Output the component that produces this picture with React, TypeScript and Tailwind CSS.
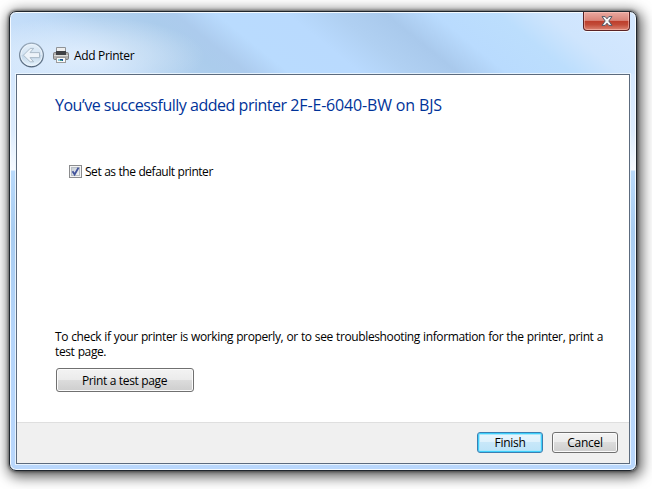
import React from "react";

function BackButton() {
  return (
    <svg width="26" height="26" viewBox="0 0 26 26" className="shrink-0">
      <defs>
        <linearGradient id="orb" x1="0" y1="0" x2="0" y2="1">
          <stop offset="0" stopColor="#e5f0fa" />
          <stop offset="0.5" stopColor="#d3e3f2" />
          <stop offset="0.52" stopColor="#c2d6e8" />
          <stop offset="1" stopColor="#e9f6ff" />
        </linearGradient>
        <linearGradient id="rim" x1="0" y1="0" x2="0" y2="1">
          <stop offset="0" stopColor="#9aabbc" />
          <stop offset="1" stopColor="#56697e" />
        </linearGradient>
      </defs>
      <circle cx="12.5" cy="13" r="11.8" fill="url(#orb)" stroke="url(#rim)" strokeWidth="1.4" />
      <circle cx="12.5" cy="13" r="10.7" fill="none" stroke="#f4faff" strokeWidth="0.9" opacity="0.8" />
      <path
        d="M4.4 13.2 L11.2 6.4 H14.6 L11 10.6 H20.5 V15.6 H11 L14.6 19.8 H11.2 Z"
        fill="#edf3f9"
        stroke="#a5b5c4"
        strokeWidth="0.9"
        strokeLinejoin="round"
      />
    </svg>
  );
}

function PrinterIcon() {
  return (
    <svg width="16" height="16" viewBox="0 0 16 16" className="shrink-0">
      <path d="M3.5 0.5 H12.5 V6 H3.5 Z" fill="#eeeeee" stroke="#8f9397" />
      <rect x="0.5" y="5.5" width="15" height="7" rx="1.2" fill="#b3b2b0" stroke="#7d7e80" />
      <rect x="3" y="4" width="10" height="4" fill="#3f4145" />
      <rect x="1" y="8" width="14" height="1" fill="#dededc" />
      <rect x="3" y="10" width="10" height="1" fill="#5d6062" />
      <rect x="3.5" y="10.5" width="9" height="5" fill="#fafafa" stroke="#9c9c9c" />
      <rect x="5" y="12" width="2" height="2" fill="#8ccce0" />
      <rect x="7" y="12" width="3" height="2" fill="#19529b" />
      <rect x="7" y="13" width="2" height="1" fill="#49a08c" />
    </svg>
  );
}

function CloseButton() {
  return (
    <button className="mr-[6px] flex h-[19px] w-[47px] items-center justify-center rounded-b-[4px] border border-t-0 border-[#5b2224] bg-[linear-gradient(#eaa9a1_0%,#d98478_47%,#bd3d2b_50%,#c24b38_70%,#dc8574_100%)] shadow-[inset_0_0_0_1px_rgba(255,205,195,0.5),0_1px_0_#f5faff]">
      <svg width="12" height="10" viewBox="0 0 12 10">
        <path
          d="M1 0.6 H4.2 L6 2.8 L7.8 0.6 H11 L7.8 5 L11 9.4 H7.8 L6 7.2 L4.2 9.4 H1 L4.2 5 Z"
          fill="#f7f7f7"
          stroke="#525866"
          strokeWidth="1"
          strokeLinejoin="round"
        />
      </svg>
    </button>
  );
}

function CheckBox() {
  return (
    <svg width="13" height="13" viewBox="0 0 13 13" className="shrink-0">
      <defs>
        <linearGradient id="well" x1="0" y1="0" x2="1" y2="1">
          <stop offset="0" stopColor="#c6cdd4" />
          <stop offset="1" stopColor="#f5f6f7" />
        </linearGradient>
      </defs>
      <rect x="0.5" y="0.5" width="12" height="12" fill="#f4f4f4" stroke="#8b8c8e" />
      <rect x="2.5" y="2.5" width="8" height="8" fill="url(#well)" stroke="#b9bfc6" />
      <path d="M3.5 6.2 L5.6 9.4 L9.5 2.6" fill="none" stroke="#43549c" strokeWidth="1.9" />
    </svg>
  );
}

const grayButton =
  "flex items-center justify-center rounded-[3px] border border-[#707070] bg-[linear-gradient(#f3f3f3_0%,#ebebeb_49%,#dcdcdc_50%,#cecece_100%)] shadow-[inset_0_0_0_1px_#fbfbfb]";

export default function App() {
  return (
    <div className="h-[489px] w-[652px] overflow-hidden bg-white pt-[11px] pl-[9px] font-['Open_Sans','Noto_Sans',sans-serif] text-[12px] leading-[15px] text-black">
      <div className="flex h-[460px] w-[628px] flex-col rounded-[7px] border border-[#20262d] bg-[linear-gradient(to_bottom,transparent_62px,#d4e7fd_62px,#ddecfd_120px,#f6faff_158px,#b9dafb_159px,#a9cdf1_220px,#b5d5fa_320px,#b9d7fc_100%),radial-gradient(ellipse_120px_40px_at_75px_44px,rgba(240,247,255,0.65),rgba(236,245,255,0.35)_55%,transparent),linear-gradient(39deg,#cfe4fb_0%,#c0dbf8_14%,#b2d1ef_22%,#abccec_30%,#accbed_34%,#b9dbfe_40%,#b9dafe_50%,#b0d0f2_57%,#a9c9ec_64%,#b9dbfe_71%,#bcdefd_80%,#cfe5fd_87%,#d5e8ff_100%)] bg-[length:100%_100%,100%_62px,100%_62px] bg-no-repeat shadow-[inset_0_0_0_1px_rgba(250,253,255,0.9),0_0_3px_1px_rgba(0,0,0,0.45),2px_3px_13px_3px_rgba(0,0,0,0.62)]">
        <header className="flex h-[61px] shrink-0 items-start justify-between">
          <div className="flex items-center pt-[30px] pl-[9px]">
            <BackButton />
            <div className="ml-[8px] flex items-center">
              <PrinterIcon />
              <span className="ml-[5px] whitespace-nowrap tracking-[-0.32px]">Add Printer</span>
            </div>
          </div>
          <CloseButton />
        </header>
        <main className="mx-[6px] mt-[1px] flex h-[390px] shrink-0 flex-col border border-[#5c6b7e] bg-white shadow-[0_0_0_1px_rgba(239,248,255,0.85)]">
          <section className="flex h-[347px] shrink-0 flex-col items-start pt-[19px] pl-[38px]">
            <h1 className="h-[22px] whitespace-nowrap text-[16px] leading-[22px] text-[#003399]">
              <span className="tracking-[-0.48px]">You’ve successfully added printer </span>
              <span className="tracking-[-0.16px]">2F-E-6040-BW on BJS</span>
            </h1>
            <label className="mt-[48px] ml-[14px] flex h-[15px] items-center">
              <CheckBox />
              <span className="ml-[3px] whitespace-nowrap tracking-[-0.47px] [word-spacing:0.3px]">
                Set as the default printer
              </span>
            </label>
            <p className="mt-[150px] whitespace-nowrap tracking-[-0.38px] [word-spacing:0.4px]">
              To check if your printer is working properly, or to see troubleshooting information for the printer, print a
              <br />
              test page.
            </p>
            <button className={`${grayButton} mt-[9px] ml-[1px] h-[24px] w-[138px] tracking-[-0.35px]`}>
              <span className="-ml-px">Print a test page</span>
            </button>
          </section>
          <footer className="flex h-[41px] shrink-0 items-start justify-end gap-[9px] border-t border-[#dfdfdf] bg-[#f0f0f0] pt-[9px] pr-[11px]">
            <button className="flex h-[21px] w-[66px] items-center justify-center rounded-[3px] border border-[#3c7fb1] bg-[linear-gradient(#eaf6fd_0%,#def1fc_49%,#c8e7f9_50%,#bce3f8_100%)] tracking-[-0.3px] shadow-[inset_0_0_0_1px_#40d0fc,inset_0_0_0_2px_#a9e7fc]">
              Finish
            </button>
            <button className={`${grayButton} h-[21px] w-[66px] tracking-[-0.25px]`}>Cancel</button>
          </footer>
        </main>
      </div>
    </div>
  );
}
